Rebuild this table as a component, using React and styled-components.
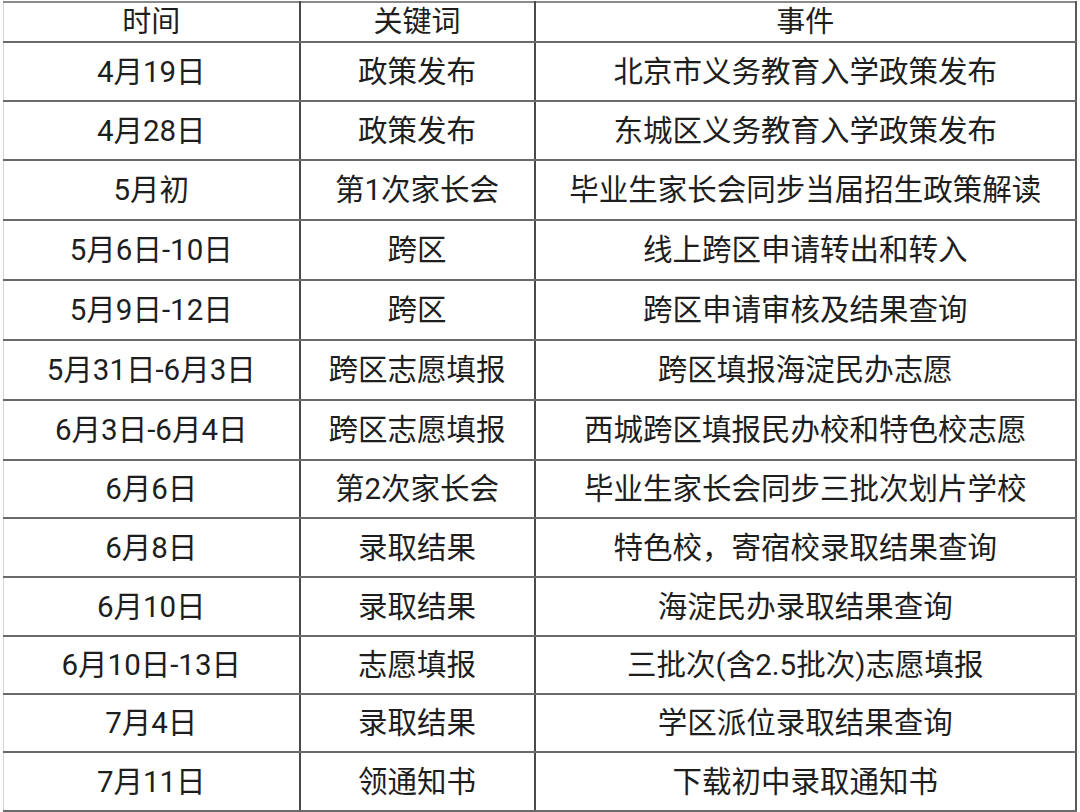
import React from 'react';
import styled, { createGlobalStyle } from 'styled-components';

const rows = [
  ['4月19日', '政策发布', '北京市义务教育入学政策发布'],
  ['4月28日', '政策发布', '东城区义务教育入学政策发布'],
  ['5月初', '第1次家长会', '毕业生家长会同步当届招生政策解读'],
  ['5月6日-10日', '跨区', '线上跨区申请转出和转入'],
  ['5月9日-12日', '跨区', '跨区申请审核及结果查询'],
  ['5月31日-6月3日', '跨区志愿填报', '跨区填报海淀民办志愿'],
  ['6月3日-6月4日', '跨区志愿填报', '西城跨区填报民办校和特色校志愿'],
  ['6月6日', '第2次家长会', '毕业生家长会同步三批次划片学校'],
  ['6月8日', '录取结果', '特色校，寄宿校录取结果查询'],
  ['6月10日', '录取结果', '海淀民办录取结果查询'],
  ['6月10日-13日', '志愿填报', '三批次(含2.5批次)志愿填报'],
  ['7月4日', '录取结果', '学区派位录取结果查询'],
  ['7月11日', '领通知书', '下载初中录取通知书'],
];

// row pitch (cell + 2px rule) read off the screenshot
const pitches = [59, 59, 60, 60, 60, 60, 60, 58, 59, 59, 58, 58, 59];

const GlobalStyle = createGlobalStyle`
  html, body {
    margin: 0;
    padding: 0;
    background: #ffffff;
  }
  body {
    font-family: Roboto, "Noto Sans CJK SC", sans-serif;
    color: #1e1e1e;
  }
`;

const Page = styled.div`
  width: 1080px;
  height: 812px;
  padding: 1px 0 0 3px;
  box-sizing: border-box;
  background: #ffffff;
`;

const Table = styled.table`
  width: 1074px;
  table-layout: fixed;
  border-collapse: collapse;
  border-top: 2px solid #8a8a8a;
  border-left: 1px solid #d4d4d4;
  border-right: 2px solid #5a5a5a;
  border-bottom: 2px solid #5a5a5a;
`;

const HeadCell = styled.th`
  height: 38px;
  padding: 0;
  font-weight: 400;
  font-size: 29px;
  line-height: 1;
  text-align: center;
  vertical-align: middle;
  border-bottom: 2px solid #6a6a6a;
  border-left: ${(p) => (p.$first ? 'none' : '2px solid #4a4a4a')};
  white-space: nowrap;
`;

const Cell = styled.td`
  height: ${(p) => p.$h}px;
  padding: 2px 0 0;
  font-size: 29.5px;
  line-height: 1;
  text-align: center;
  vertical-align: middle;
  border-bottom: 2px solid #6a6a6a;
  border-left: ${(p) => (p.$first ? 'none' : '2px solid #4a4a4a')};
  white-space: nowrap;
`;

export default function App() {
  return (
    <Page>
      <GlobalStyle />
      <Table>
        <colgroup>
          <col style={{ width: 296 }} />
          <col style={{ width: 235 }} />
          <col />
        </colgroup>
        <thead>
          <tr>
            <HeadCell $first>时间</HeadCell>
            <HeadCell>关键词</HeadCell>
            <HeadCell>事件</HeadCell>
          </tr>
        </thead>
        <tbody>
          {rows.map((r, i) => {
            const h = pitches[i] - 4;
            return (
              <tr key={i}>
                <Cell $first $h={h}>{r[0]}</Cell>
                <Cell $h={h}>{r[1]}</Cell>
                <Cell $h={h}>{r[2]}</Cell>
              </tr>
            );
          })}
        </tbody>
      </Table>
    </Page>
  );
}
